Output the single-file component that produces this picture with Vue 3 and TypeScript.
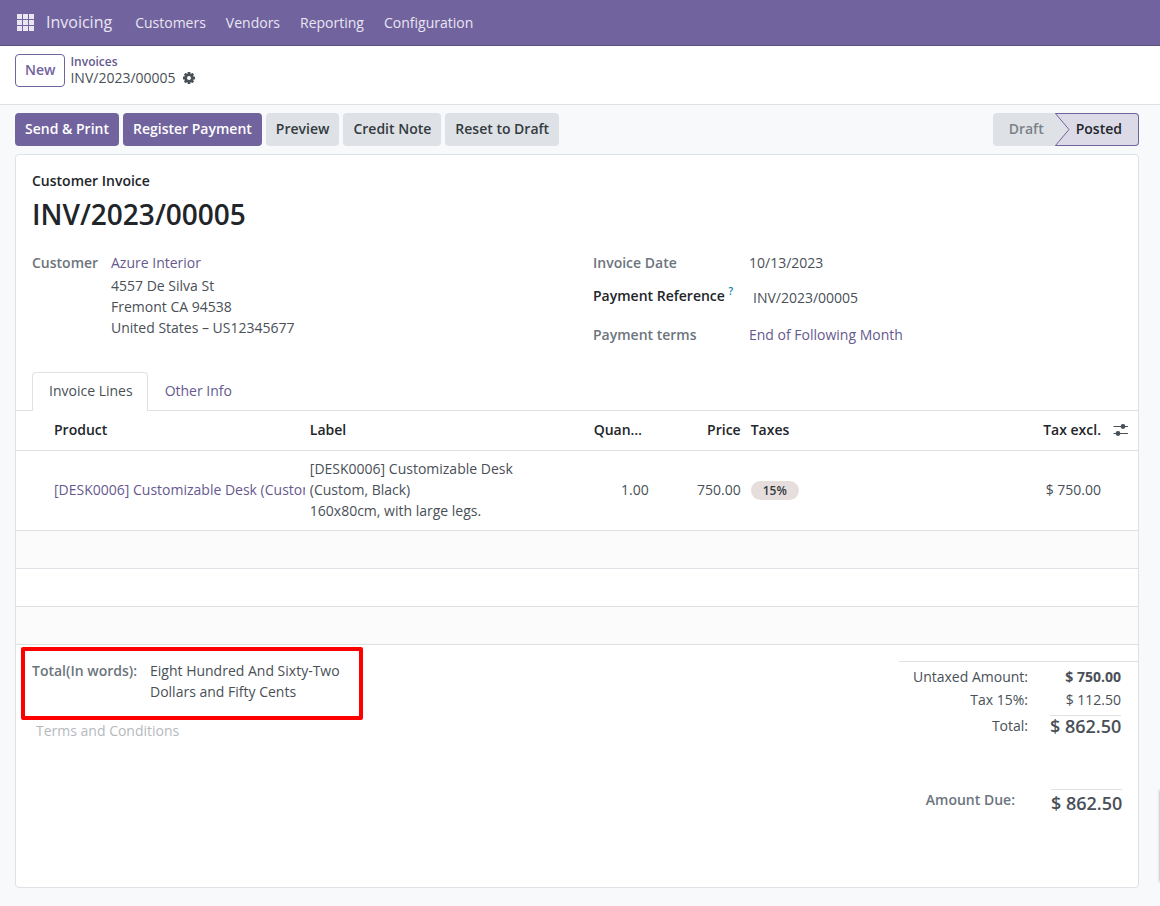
<script setup lang="ts">
import { ref } from 'vue'

interface InvoiceLine {
  product: string
  label: string[]
  quantity: string
  price: string
  tax: string
  subtotal: string
}

const menus: string[] = ['Customers', 'Vendors', 'Reporting', 'Configuration']
const secondaryActions: string[] = ['Preview', 'Credit Note', 'Reset to Draft']
const address: string[] = ['4557 De Silva St', 'Fremont CA 94538', 'United States – US12345677']
const lines: InvoiceLine[] = [
  {
    product: '[DESK0006] Customizable Desk (Custom, Black)',
    label: ['[DESK0006] Customizable Desk (Custom, Black)', '160x80cm, with large legs.'],
    quantity: '1.00',
    price: '750.00',
    tax: '15%',
    subtotal: '$ 750.00',
  },
]
const emptyRows = 3
const tabs: string[] = ['Invoice Lines', 'Other Info']
const activeTab = ref<string>('Invoice Lines')
const paymentReference = ref<string>('INV/2023/00005')
const terms = ref<string>('')
const gearTeeth: number[] = [0, 45, 90, 135, 180, 225, 270, 315]
</script>

<template>
  <div class="app">
    <header class="navbar">
      <button class="apps" type="button" aria-label="Apps">
        <svg width="18" height="18" viewBox="0 0 18 18" fill="currentColor">
          <template v-for="r in 3" :key="r">
            <rect v-for="c in 3" :key="c" :x="(c - 1) * 6" :y="(r - 1) * 6" width="5" height="5" />
          </template>
        </svg>
      </button>
      <a class="brand" href="#">Invoicing</a>
      <nav class="menus">
        <a v-for="m in menus" :key="m" href="#">{{ m }}</a>
      </nav>
    </header>

    <section class="control-panel">
      <button class="btn outline" type="button">New</button>
      <div class="crumbs">
        <a href="#">Invoices</a>
        <div class="current">
          <span>INV/2023/00005</span>
          <button class="icon-btn" type="button" aria-label="Actions">
            <svg width="12" height="12" viewBox="0 0 12 12" fill="currentColor">
              <rect
                v-for="a in gearTeeth"
                :key="a"
                x="4.6"
                y="0"
                width="2.8"
                height="3"
                rx="0.4"
                :transform="`rotate(${a} 6 6)`"
              />
              <circle cx="6" cy="6" r="3.3" fill="none" stroke="currentColor" stroke-width="2.6" />
            </svg>
          </button>
        </div>
      </div>
    </section>

    <main class="content">
      <div class="statusbar">
        <div class="actions">
          <button class="btn primary" type="button">Send &amp; Print</button>
          <button class="btn primary" type="button">Register Payment</button>
          <button v-for="a in secondaryActions" :key="a" class="btn secondary" type="button">{{ a }}</button>
        </div>
        <div class="states">
          <button class="state" type="button">Draft</button>
          <button class="state current-state" type="button">
            <svg class="chevron" width="15" height="33" viewBox="0 0 15 33">
              <path d="M0 0L14 16.5L0 33Z" fill="#dee2e6" />
              <path d="M0.3 0.3L14 16.5L0.3 32.7" fill="none" stroke="#71639e" stroke-width="1" />
            </svg>
            Posted
          </button>
        </div>
      </div>

      <article class="sheet">
        <div class="title">
          <span class="kind">Customer Invoice</span>
          <h1>INV/2023/00005</h1>
        </div>

        <div class="groups">
          <div class="partner">
            <span class="label">Customer</span>
            <div class="partner-value">
              <a href="#">Azure Interior</a>
              <span v-for="l in address" :key="l">{{ l }}</span>
            </div>
          </div>
          <div class="fields">
            <span class="label">Invoice Date</span>
            <span>10/13/2023</span>
            <label class="label strong" for="payref">Payment Reference <sup>?</sup></label>
            <input id="payref" v-model="paymentReference" type="text" />
            <span class="label">Payment terms</span>
            <a href="#">End of Following Month</a>
          </div>
        </div>

        <div class="tabs" role="tablist">
          <button
            v-for="t in tabs"
            :key="t"
            type="button"
            role="tab"
            class="tab"
            :class="{ active: t === activeTab }"
            :aria-selected="t === activeTab"
            @click="activeTab = t"
          >
            {{ t }}
          </button>
        </div>

        <table class="lines">
          <colgroup>
            <col class="c-handle" />
            <col class="c-product" />
            <col class="c-label" />
            <col class="c-qty" />
            <col class="c-price" />
            <col />
            <col class="c-sub" />
            <col class="c-opt" />
          </colgroup>
          <thead>
            <tr>
              <th></th>
              <th>Product</th>
              <th>Label</th>
              <th class="ellipsis">Quantity</th>
              <th class="num">Price</th>
              <th>Taxes</th>
              <th class="num">Tax excl.</th>
              <th class="opt">
                <button class="icon-btn" type="button" aria-label="Optional columns">
                  <svg width="16" height="14" viewBox="0 0 16 14" fill="currentColor">
                    <rect x="0.5" y="3" width="14.5" height="1" />
                    <rect x="0.5" y="10" width="14.5" height="1" />
                    <circle cx="10" cy="3.5" r="2.4" />
                    <circle cx="5" cy="10.5" r="2.4" />
                  </svg>
                </button>
              </th>
            </tr>
          </thead>
          <tbody>
            <tr v-for="line in lines" :key="line.product">
              <td></td>
              <td class="product"><a href="#">{{ line.product }}</a></td>
              <td class="desc"><div v-for="d in line.label" :key="d">{{ d }}</div></td>
              <td class="num">{{ line.quantity }}</td>
              <td class="num">{{ line.price }}</td>
              <td><span class="tag">{{ line.tax }}</span></td>
              <td class="num">{{ line.subtotal }}</td>
              <td></td>
            </tr>
            <tr v-for="n in emptyRows" :key="n" class="blank" :class="{ striped: n % 2 === 1 }">
              <td colspan="8"></td>
            </tr>
          </tbody>
        </table>

        <div class="footer">
          <div class="notes">
            <div class="words">
              <span class="label">Total(In words):</span>
              <span>Eight Hundred And Sixty-Two Dollars and Fifty Cents</span>
            </div>
            <textarea v-model="terms" rows="1" placeholder="Terms and Conditions" aria-label="Terms and Conditions"></textarea>
          </div>
          <div class="totals">
            <dl class="sums">
              <dt>Untaxed Amount:</dt>
              <dd class="bold">$ 750.00</dd>
              <dt>Tax 15%:</dt>
              <dd>$ 112.50</dd>
              <dt class="total-row">Total:</dt>
              <dd class="grand total-row">$ 862.50</dd>
            </dl>
            <dl class="due">
              <dt class="label">Amount Due:</dt>
              <dd class="grand">$ 862.50</dd>
            </dl>
          </div>
        </div>
      </article>
    </main>
    <div class="edge-handle" aria-hidden="true"></div>
  </div>
</template>

<style>
body {
  margin: 0;
  background: #f8f9fa;
}
</style>

<style scoped>
.app {
  min-height: 100vh;
  display: flex;
  flex-direction: column;
  font: 14px/21px "Open Sans", "Noto Sans", sans-serif;
  color: #495057;
}
.app * {
  box-sizing: border-box;
}
a {
  color: #66598f;
  text-decoration: none;
}
button,
input,
textarea {
  font: inherit;
  color: inherit;
  margin: 0;
}
.navbar {
  display: flex;
  align-items: center;
  height: 46px;
  padding: 0 17px;
  background: #71639e;
  border-bottom: 1px solid #5a4f7f;
  color: #e9e6f2;
}
.navbar a {
  color: inherit;
}
.apps,
.icon-btn {
  display: flex;
  padding: 0;
  border: 0;
  background: none;
}
.brand {
  margin-left: 11px;
  font-size: 16px;
}
.menus {
  display: flex;
  gap: 20px;
  margin-left: 23px;
}
.control-panel {
  display: flex;
  gap: 5px;
  height: 59px;
  padding: 8px 15px;
  background: #fff;
  border-bottom: 1px solid #dee2e6;
}
.btn {
  height: 33px;
  padding: 0 9px 2px;
  border: 1px solid transparent;
  border-radius: 4px;
  font-weight: 600;
  white-space: nowrap;
}
.outline {
  background: #fff;
  border-color: #71639e;
  color: #71639e;
}
.primary {
  background: #71639e;
  color: #fff;
}
.secondary {
  background: #dee2e6;
  color: #343a40;
}
.crumbs {
  line-height: 16px;
}
.crumbs > a {
  display: block;
  font-size: 12px;
  font-weight: 600;
}
.current {
  display: flex;
  align-items: center;
  gap: 7px;
}
.content {
  flex: 1;
  display: flex;
  flex-direction: column;
  padding: 8px 21px 18px 15px;
}
.statusbar {
  display: flex;
  justify-content: space-between;
  margin-bottom: 8px;
}
.actions {
  display: flex;
  gap: 4px;
}
.states {
  display: flex;
}
.state {
  height: 33px;
  padding: 0 11px 2px 16px;
  border: 0;
  border-radius: 4px 0 0 4px;
  background: #dee2e6;
  color: #7b8188;
  font-weight: 600;
}
.current-state {
  position: relative;
  padding: 0 16px 2px 21px;
  border: 1px solid #71639e;
  border-left: 0;
  border-radius: 0 4px 4px 0;
  background: #dddae8;
  color: #212529;
}
.chevron {
  position: absolute;
  left: 0;
  top: -1px;
}
.sheet {
  flex: 1;
  background: #fff;
  border: 1px solid #dee2e6;
  border-radius: 4px;
}
.title {
  padding: 15px 16px 0;
  color: #212529;
}
.kind {
  display: block;
  font-weight: 600;
}
h1 {
  margin: 5px 0 0;
  font-size: 28px;
  line-height: 36px;
  font-weight: 600;
}
.groups {
  display: grid;
  grid-template-columns: 1fr 1fr;
  padding: 20px 16px 0;
}
.label {
  font-weight: 600;
  color: #6c757d;
}
.partner {
  display: grid;
  grid-template-columns: 79px 1fr;
}
.partner-value {
  display: grid;
  align-content: start;
}
.partner-value a {
  margin-bottom: 2px;
}
.fields {
  display: grid;
  grid-template-columns: 156px 1fr;
  align-content: start;
  row-gap: 10px;
  padding-left: 16px;
}
.fields .strong {
  color: #212529;
  padding-top: 2px;
}
sup {
  font-size: 10px;
  line-height: 1;
  color: #0180a5;
}
.fields input {
  width: 100%;
  height: 31px;
  padding: 0 4px 2px;
  border: 0;
  background: none;
}
.tabs {
  display: flex;
  margin-top: 27px;
  padding: 0 16px;
  border-bottom: 1px solid #dee2e6;
}
.tab {
  height: 38px;
  padding: 0 14px 2px 16px;
  border: 1px solid transparent;
  border-bottom: 0;
  border-radius: 4px 4px 0 0;
  background: none;
  color: #66598f;
}
.tab.active {
  height: 39px;
  margin-bottom: -1px;
  padding-bottom: 3px;
  border-color: #dee2e6;
  background: #fff;
  color: #495057;
}
.lines {
  width: 100%;
  table-layout: fixed;
  border-collapse: separate;
  border-spacing: 0;
}
.c-handle {
  width: 33px;
}
.c-product {
  width: 22.8%;
}
.c-label {
  width: 25.3%;
}
.c-qty {
  width: 65px;
}
.c-price {
  width: 92px;
}
.c-sub {
  width: 96px;
}
.c-opt {
  width: 32px;
}
th,
td {
  padding: 7px 5px 9px;
  border-bottom: 1px solid #dee2e6;
  text-align: left;
  vertical-align: middle;
}
th {
  height: 40px;
  font-weight: 600;
  color: #212529;
}
.num {
  text-align: right;
}
.ellipsis {
  padding-right: 10px;
  overflow: hidden;
  text-overflow: ellipsis;
  white-space: nowrap;
}
.opt {
  padding-left: 7px;
  color: #495057;
}
.product {
  padding-right: 0;
}
.product a {
  display: block;
  overflow: hidden;
  white-space: nowrap;
}
.desc {
  padding-right: 60px;
}
.blank td {
  height: 38px;
  padding: 0;
}
.striped {
  background: #fbfbfc;
}
.tag {
  display: inline-block;
  padding: 0 12px;
  border-radius: 10px;
  background: #e6dedd;
  color: #343a40;
  font-size: 12px;
  line-height: 19px;
  font-weight: 600;
}
.footer {
  display: flex;
  justify-content: space-between;
  padding: 2px 0 56px;
}
.words {
  display: grid;
  grid-template-columns: 118px 204px;
  align-content: start;
  margin-left: 5px;
  width: 342px;
  height: 73px;
  padding: 9px 5px 10px 7px;
  border: 4px solid #f00;
  border-radius: 2px;
}
textarea {
  display: block;
  width: 100%;
  height: 29px;
  padding: 0 20px;
  border: 0;
  resize: none;
  background: none;
}
textarea::placeholder {
  color: #b5b9bd;
  opacity: 1;
}
.totals {
  width: 239px;
  margin-top: 14px;
}
dl {
  display: grid;
  margin: 0;
  text-align: right;
}
dd {
  margin: 0;
}
.sums {
  grid-template-columns: 1fr 71px;
  column-gap: 22px;
  row-gap: 2px;
  padding: 4px 17px 0 0;
  border-top: 1px solid #dee2e6;
}
.bold {
  font-weight: 700;
}
.grand {
  border-top: 1px solid #dee2e6;
  font-size: 18px;
  font-weight: 600;
  white-space: nowrap;
}
.total-row {
  margin-top: 3px;
}
.due {
  grid-template-columns: 1fr 71px;
  column-gap: 36px;
  margin-top: 52px;
  padding-right: 16px;
}
.due .grand {
  padding-top: 3px;
}
.edge-handle {
  position: fixed;
  top: 790px;
  right: -10px;
  width: 10px;
  height: 92px;
  box-shadow: 0 0 3px rgba(0, 0, 0, 0.4);
}
</style>
